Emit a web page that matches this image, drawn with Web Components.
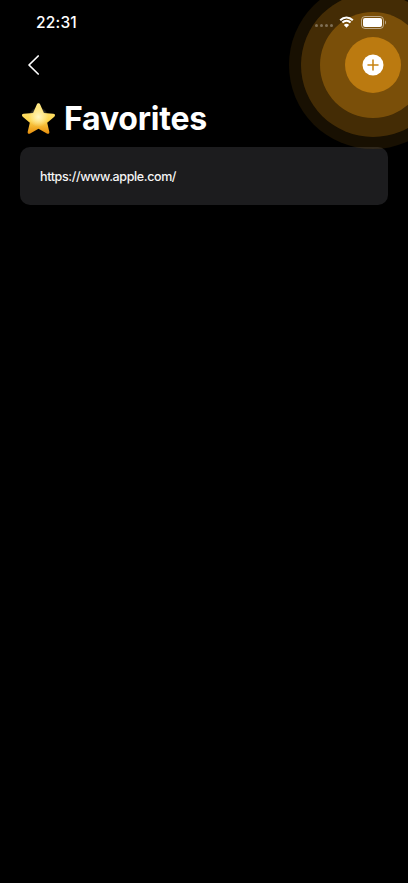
<!DOCTYPE html>
<html>
<head>
<meta charset="utf-8">
<title>Favorites</title>
<style>
  html, body { margin: 0; background: #000; }
  body { font-family: Inter, "Liberation Sans", sans-serif; color: #fff; }
</style>
</head>
<body>
<favorites-screen>
  <status-bar time="22:31"></status-bar>
  <nav-bar></nav-bar>
  <page-title>Favorites</page-title>
  <favorite-row>https://www.apple.com/</favorite-row>
  <ripple-button></ripple-button>
</favorites-screen>

<script>
class FavoritesScreen extends HTMLElement {
  constructor() {
    super();
    this.attachShadow({ mode: 'open' }).innerHTML = `
      <style>
        :host { display: flex; flex-direction: column; position: relative; width: 408px; height: 883px; overflow: hidden; background: #000; }
      </style>
      <slot></slot>`;
  }
}

class StatusBar extends HTMLElement {
  constructor() {
    super();
    this.attachShadow({ mode: 'open' }).innerHTML = `
      <style>
        :host { display: flex; align-items: center; height: 44px; box-sizing: border-box; padding: 0 22px 0 36px; position: relative; z-index: 3; }
        .time { font-size: 15.5px; font-weight: 500; letter-spacing: 0.2px; flex: 1; }
        .dots { display: flex; gap: 1.500px; margin-right: 6px; margin-top: 7px; }
        .dots i { width: 3.500px; height: 3.500px; border-radius: 50%; background: rgba(255,255,255,.32); }
        .wifi { margin-right: 7px; display: block; }
        .battery { display: block; }
      </style>
      <span class="time"></span>
      <span class="dots"><i></i><i></i><i></i><i></i></span>
      <svg class="wifi" width="15" height="12" viewBox="0 0 15 12">
        <path d="M1.200 4.300C2.900 2.600 5.100 1.500 7.500 1.500s4.600 1.100 6.300 2.800M3.400 6.500c1.100-1.100 2.500-1.800 4.100-1.800s3 .7 4.100 1.800" fill="none" stroke="#fff" stroke-width="2"/>
        <path d="M7.500 11.800 4.900 8.900c.7-.7 1.600-1.100 2.600-1.100s1.900.4 2.600 1.100z" fill="#fff"/>
      </svg>
      <svg class="battery" width="25" height="13" viewBox="0 0 25 13">
        <rect x=".5" y=".5" width="22" height="12" rx="3.500" fill="none" stroke="rgba(255,255,255,.5)"/>
        <rect x="2" y="2" width="19" height="9" rx="2" fill="#fff"/>
        <path d="M24 4.500c.6.300 1 1 1 2s-.4 1.700-1 2z" fill="rgba(255,255,255,.5)"/>
      </svg>`;
    this.shadowRoot.querySelector('.time').textContent = this.getAttribute('time');
  }
}

class NavBar extends HTMLElement {
  constructor() {
    super();
    this.attachShadow({ mode: 'open' }).innerHTML = `
      <style>
        :host { display: flex; align-items: center; height: 42px; padding-left: 27px; }
        svg { display: block; }
      </style>
      <svg width="13" height="22" viewBox="0 0 13 22">
        <path d="M11.200 2 2 11l9.200 9" fill="none" stroke="#fff" stroke-width="1.700" stroke-linecap="round" stroke-linejoin="round"/>
      </svg>`;
  }
}

class PageTitle extends HTMLElement {
  constructor() {
    super();
    this.attachShadow({ mode: 'open' }).innerHTML = `
      <style>
        :host { display: flex; align-items: center; height: 61px; box-sizing: border-box; padding: 3px 0 0 21px; gap: 8px; font-size: 32px; font-weight: 700; letter-spacing: -0.2px; }
        svg { display: block; flex: none; }
      </style>
      <svg width="35" height="33" viewBox="0 0 35 33">
        <defs>
          <linearGradient id="s" x1="0" y1="0" x2="0" y2="1">
            <stop offset="0" stop-color="#ffe98a"/>
            <stop offset=".55" stop-color="#fdd64e"/>
            <stop offset="1" stop-color="#e88e0c"/>
          </linearGradient>
          <radialGradient id="g" cx=".5" cy=".5" r=".5">
            <stop offset="0" stop-color="#fff8c8" stop-opacity=".95"/>
            <stop offset="1" stop-color="#fff8c8" stop-opacity="0"/>
          </radialGradient>
        </defs>
        <path d="M17.500 1.200c.8 0 1.300.5 1.700 1.400l3.700 8.400 9.400.8c1.800.2 2.300 1.700 1 2.900l-7.100 6 2.100 9c.4 1.700-.9 2.700-2.500 1.800l-8.300-4.800-8.300 4.800c-1.600.9-2.900-.1-2.500-1.800l2.100-9-7.100-6c-1.300-1.200-.8-2.700 1-2.900l9.400-.8 3.700-8.400c.4-.9.900-1.400 1.700-1.400z" fill="url(#s)"/>
        <circle cx="17.500" cy="15" r="10" fill="url(#g)"/>
      </svg>
      <span><slot></slot></span>`;
  }
}

class FavoriteRow extends HTMLElement {
  constructor() {
    super();
    this.attachShadow({ mode: 'open' }).innerHTML = `
      <style>
        :host { display: flex; align-items: center; height: 58px; box-sizing: border-box; margin: 0 20px; padding: 0 20px; border-radius: 10px; background: #1c1c1e; font-size: 12.5px; font-weight: 500; letter-spacing: -0.38px; color: #f5f5f5; }
      </style>
      <slot></slot>`;
  }
}

class RippleButton extends HTMLElement {
  constructor() {
    super();
    this.attachShadow({ mode: 'open' }).innerHTML = `
      <style>
        :host { display: block; position: absolute; left: 373px; top: 65px; width: 0; height: 0; z-index: 1; }
        i { position: absolute; border-radius: 50%; transform: translate(-50%, -50%); background: #bb7a10; }
        .r4 { width: 168px; height: 168px; opacity: .13; }
        .r3 { width: 144px; height: 144px; opacity: .27; }
        .r2 { width: 106px; height: 106px; opacity: .46; }
        .r1 { width: 56px; height: 56px; }
        .plus { position: absolute; left: -11px; top: -11px; display: block; }
      </style>
      <i class="r4"></i><i class="r3"></i><i class="r2"></i><i class="r1"></i>
      <svg class="plus" width="22" height="22" viewBox="0 0 22 22">
        <circle cx="11" cy="11" r="10.500" fill="#fff"/>
        <path d="M11 6v10M6 11h10" stroke="#c8820f" stroke-width="1.500" stroke-linecap="round"/>
      </svg>`;
  }
}

customElements.define('favorites-screen', FavoritesScreen);
customElements.define('status-bar', StatusBar);
customElements.define('nav-bar', NavBar);
customElements.define('page-title', PageTitle);
customElements.define('favorite-row', FavoriteRow);
customElements.define('ripple-button', RippleButton);
</script>
</body>
</html>
